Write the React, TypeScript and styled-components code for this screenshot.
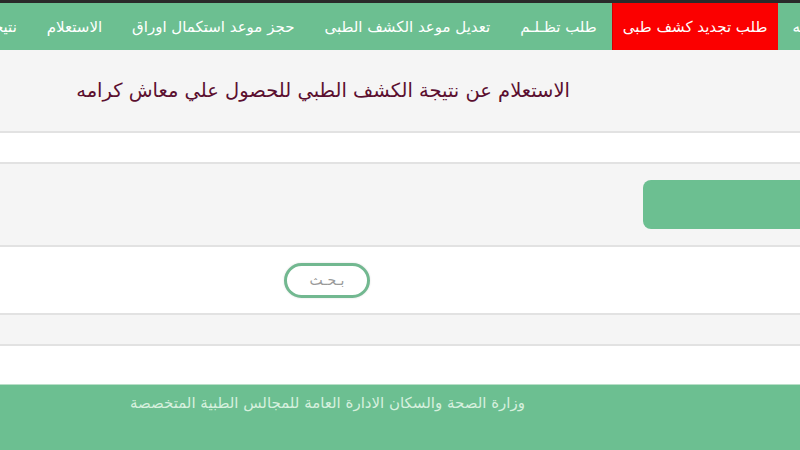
import styled, { createGlobalStyle } from 'styled-components';

const GlobalStyle = createGlobalStyle`
  html, body {
    margin: 0;
    padding: 0;
    background: #ffffff;
    overflow: hidden;
  }
  body {
    font-family: "DejaVu Sans", "Liberation Sans", sans-serif;
  }
`;

const green = '#6cbf91';
const line = '#e2e2e2';

const Page = styled.div`
  direction: rtl;
  width: 800px;
  height: 450px;
  overflow: hidden;
  border-top: 3px solid #2a2a2a;
  box-sizing: border-box;
`;

const NavBar = styled.nav`
  height: 47px;
  background: ${green};
  overflow: hidden;
`;

const NavList = styled.ul`
  display: flex;
  list-style: none;
  margin: 0 -111px 0 0;
  padding: 0;
  height: 100%;
  white-space: nowrap;
`;

const NavItem = styled.li<{ $active?: boolean }>`
  display: flex;
  align-items: center;
  padding: 0 ${(p) => (p.$active ? 10 : 15)}px;
  height: 100%;
  color: #ffffff;
  font-size: 15px;
  background: ${(p) => (p.$active ? '#fb0000' : 'transparent')};
  border-left: ${(p) => (p.$active ? '1px solid #d10000' : 'none')};
`;

const Band = styled.section<{ $gray?: boolean; $h: number; $last?: boolean }>`
  height: ${(p) => p.$h}px;
  background: ${(p) => (p.$gray ? '#f5f5f5' : '#ffffff')};
  border-bottom: ${(p) => (p.$last ? 'none' : `2px solid ${line}`)};
  box-sizing: border-box;
  display: flex;
  align-items: center;
`;

const Title = styled.h2`
  margin: 0 230px 0 0;
  font-size: 19.5px;
  font-weight: normal;
  color: #5b0f2f;
  font-family: "DejaVu Sans", "Liberation Sans", sans-serif;
`;

const GreenField = styled.div`
  width: 157px;
  height: 49px;
  background: ${green};
  border-radius: 8px 0 0 8px;
`;

const SearchButton = styled.button`
  margin: 0 430px 0 0;
  width: 86px;
  height: 35px;
  border: 3px solid #72b890;
  border-radius: 18px;
  background: #ffffff;
  color: #9a9a9a;
  font-size: 14px;
  font-family: "DejaVu Sans", sans-serif;
  box-shadow: 0 0 2px rgba(0, 0, 0, 0.15);
`;

const Footer = styled.footer`
  height: 66px;
  background: ${green};
  border-top: 1px solid #b9dfc8;
  box-sizing: border-box;
  padding: 9px 275px 0 0;
  color: #d6f0de;
  font-size: 15px;
`;

const navItems = [
  'الصفحه الرئيسيه',
  'طلب تجديد كشف طبى',
  'طلب تظـلـم',
  'تعديل موعد الكشف الطبى',
  'حجز موعد استكمال اوراق',
  'الاستعلام',
  'نتيجة الكشف',
];

export default function App() {
  return (
    <>
      <GlobalStyle />
      <Page>
        <NavBar>
          <NavList>
            {navItems.map((t, i) => (
              <NavItem key={t} $active={i === 1}>
                {t}
              </NavItem>
            ))}
          </NavList>
        </NavBar>
        <Band $gray $h={83}>
          <Title>الاستعلام عن نتيجة الكشف الطبي للحصول علي معاش كرامه</Title>
        </Band>
        <Band $h={31} />
        <Band $gray $h={83}>
          <GreenField />
        </Band>
        <Band $h={68}>
          <SearchButton>بـحـث</SearchButton>
        </Band>
        <Band $gray $h={31} />
        <Band $h={38} $last />
        <Footer>وزارة الصحة والسكان الادارة العامة للمجالس الطبية المتخصصة</Footer>
      </Page>
    </>
  );
}
